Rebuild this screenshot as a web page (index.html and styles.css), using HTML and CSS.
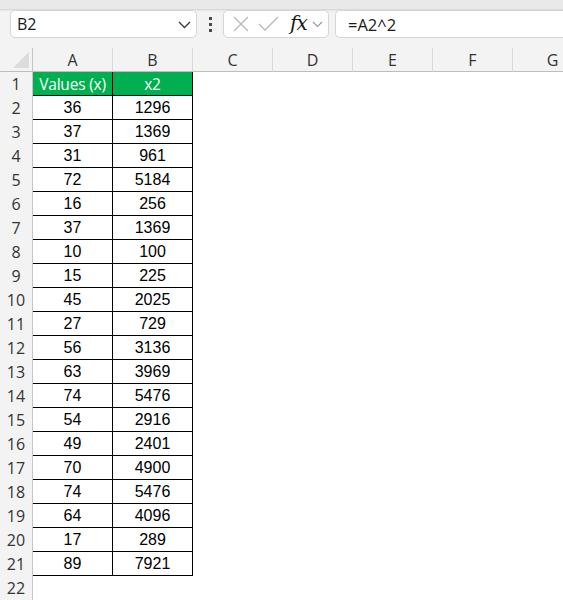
FILE: index.html
```html
<!DOCTYPE html>
<html>
<head>
<meta charset="utf-8">
<link rel="stylesheet" href="styles.css">
</head>
<body>
<div class="app">
  <div class="ribbon-edge"></div>
  <div class="fbar">
    <div class="namebox">
      <span class="ref">B2</span>
      <svg class="chev" width="13" height="8" viewBox="0 0 13 8"><path d="M1 1 L6.5 6.5 L12 1" fill="none" stroke="#3a3a3a" stroke-width="1.3"/></svg>
    </div>
    <div class="dots"><i></i><i></i><i></i></div>
    <div class="tools">
      <svg class="ico" width="18" height="18" viewBox="0 0 18 18"><path d="M2 2 L16 16 M16 2 L2 16" stroke="#b8b8b8" stroke-width="1.3" fill="none"/></svg>
      <svg class="ico" width="21" height="16" viewBox="0 0 21 16"><path d="M1 8 L7 14 L20 1" stroke="#b8b8b8" stroke-width="1.3" fill="none"/></svg>
      <span class="fx">fx</span>
      <svg class="chev2" width="11" height="7" viewBox="0 0 11 7"><path d="M1 1 L5.5 5.5 L10 1" fill="none" stroke="#9a9a9a" stroke-width="1.2"/></svg>
    </div>
    <div class="formula">=A2^2</div>
  </div>
  <div class="sheet">
    <div class="corner"><span class="tri"></span></div>
    <div class="colh">A</div><div class="colh">B</div><div class="colh">C</div><div class="colh">D</div><div class="colh">E</div><div class="colh">F</div><div class="colh">G</div>

    <div class="rowh">1</div><div class="cell head">Values (x)</div><div class="cell head">x2</div><div class="blank"></div><div class="blank"></div><div class="blank"></div><div class="blank"></div><div class="blank"></div>
    <div class="rowh">2</div><div class="cell">36</div><div class="cell">1296</div><div class="blank"></div><div class="blank"></div><div class="blank"></div><div class="blank"></div><div class="blank"></div>
    <div class="rowh">3</div><div class="cell">37</div><div class="cell">1369</div><div class="blank"></div><div class="blank"></div><div class="blank"></div><div class="blank"></div><div class="blank"></div>
    <div class="rowh">4</div><div class="cell">31</div><div class="cell">961</div><div class="blank"></div><div class="blank"></div><div class="blank"></div><div class="blank"></div><div class="blank"></div>
    <div class="rowh">5</div><div class="cell">72</div><div class="cell">5184</div><div class="blank"></div><div class="blank"></div><div class="blank"></div><div class="blank"></div><div class="blank"></div>
    <div class="rowh">6</div><div class="cell">16</div><div class="cell">256</div><div class="blank"></div><div class="blank"></div><div class="blank"></div><div class="blank"></div><div class="blank"></div>
    <div class="rowh">7</div><div class="cell">37</div><div class="cell">1369</div><div class="blank"></div><div class="blank"></div><div class="blank"></div><div class="blank"></div><div class="blank"></div>
    <div class="rowh">8</div><div class="cell">10</div><div class="cell">100</div><div class="blank"></div><div class="blank"></div><div class="blank"></div><div class="blank"></div><div class="blank"></div>
    <div class="rowh">9</div><div class="cell">15</div><div class="cell">225</div><div class="blank"></div><div class="blank"></div><div class="blank"></div><div class="blank"></div><div class="blank"></div>
    <div class="rowh">10</div><div class="cell">45</div><div class="cell">2025</div><div class="blank"></div><div class="blank"></div><div class="blank"></div><div class="blank"></div><div class="blank"></div>
    <div class="rowh">11</div><div class="cell">27</div><div class="cell">729</div><div class="blank"></div><div class="blank"></div><div class="blank"></div><div class="blank"></div><div class="blank"></div>
    <div class="rowh">12</div><div class="cell">56</div><div class="cell">3136</div><div class="blank"></div><div class="blank"></div><div class="blank"></div><div class="blank"></div><div class="blank"></div>
    <div class="rowh">13</div><div class="cell">63</div><div class="cell">3969</div><div class="blank"></div><div class="blank"></div><div class="blank"></div><div class="blank"></div><div class="blank"></div>
    <div class="rowh">14</div><div class="cell">74</div><div class="cell">5476</div><div class="blank"></div><div class="blank"></div><div class="blank"></div><div class="blank"></div><div class="blank"></div>
    <div class="rowh">15</div><div class="cell">54</div><div class="cell">2916</div><div class="blank"></div><div class="blank"></div><div class="blank"></div><div class="blank"></div><div class="blank"></div>
    <div class="rowh">16</div><div class="cell">49</div><div class="cell">2401</div><div class="blank"></div><div class="blank"></div><div class="blank"></div><div class="blank"></div><div class="blank"></div>
    <div class="rowh">17</div><div class="cell">70</div><div class="cell">4900</div><div class="blank"></div><div class="blank"></div><div class="blank"></div><div class="blank"></div><div class="blank"></div>
    <div class="rowh">18</div><div class="cell">74</div><div class="cell">5476</div><div class="blank"></div><div class="blank"></div><div class="blank"></div><div class="blank"></div><div class="blank"></div>
    <div class="rowh">19</div><div class="cell">64</div><div class="cell">4096</div><div class="blank"></div><div class="blank"></div><div class="blank"></div><div class="blank"></div><div class="blank"></div>
    <div class="rowh">20</div><div class="cell">17</div><div class="cell">289</div><div class="blank"></div><div class="blank"></div><div class="blank"></div><div class="blank"></div><div class="blank"></div>
    <div class="rowh">21</div><div class="cell">89</div><div class="cell">7921</div><div class="blank"></div><div class="blank"></div><div class="blank"></div><div class="blank"></div><div class="blank"></div>
    <div class="rowh">22</div><div class="blank"></div><div class="blank"></div><div class="blank"></div><div class="blank"></div><div class="blank"></div><div class="blank"></div><div class="blank"></div>
  </div>
</div>
</body>
</html>
```
FILE: styles.css
```css
* { box-sizing: border-box; }
html, body { margin: 0; padding: 0; background: #ffffff; overflow: hidden; }
.app { width: 563px; height: 600px; overflow: hidden; background: #f3f3f3; font-family: "Open Sans", "Noto Sans", sans-serif; }

.ribbon-edge { height: 10px; background: #e9e9e9; border-bottom: 1px solid #d9d9d9; box-shadow: 0 1px 2px rgba(0,0,0,0.06); }

.fbar { height: 38px; display: flex; align-items: flex-start; padding: 0 0 0 10px; }
.namebox { width: 187px; height: 28px; background: #fff; border: 1px solid #d6d6d6; border-radius: 5px; display: flex; align-items: center; justify-content: space-between; padding: 0 5px 0 6px; }
.ref { font-size: 16px; color: #1a1a1a; }
.chev { margin-top: 1px; }
.dots { width: 26px; height: 28px; display: flex; flex-direction: column; align-items: center; justify-content: center; gap: 3px; }
.dots i { display: block; width: 3px; height: 3px; background: #4a4a4a; }
.tools { width: 106px; height: 28px; background: #fff; border: 1px solid #d6d6d6; border-radius: 5px; display: flex; align-items: center; padding: 0 0 0 8px; }
.tools .ico:nth-child(2) { margin-left: 8px; }
.fx { font-family: "DejaVu Serif", "Liberation Serif", serif; font-style: italic; font-size: 20px; color: #1a1a1a; margin-left: 11px; letter-spacing: -1px; line-height: 1; margin-top: -3px; }
.chev2 { margin-left: 5px; }
.formula { margin-left: 6px; flex: 1; height: 28px; background: #fff; border: 1px solid #d6d6d6; border-right: none; border-radius: 5px 0 0 5px; padding-left: 12px; font-size: 16.5px; color: #1a1a1a; display: flex; align-items: center; }

.sheet { display: grid; grid-template-columns: 33px repeat(7, 80px); grid-auto-rows: 24px; background: #fff; }
.corner { background: #f3f3f3; border-right: 1px solid #c6c6c6; border-bottom: 1px solid #bdbdbd; position: relative; }
.tri { position: absolute; right: 3px; bottom: 3px; width: 16px; height: 16px; background: #dcdcdc; clip-path: polygon(100% 0, 100% 100%, 0 100%); }
.colh { background: #f3f3f3; border-right: 1px solid #dadada; border-bottom: 1px solid #bdbdbd; display: flex; align-items: center; justify-content: center; font-size: 16px; color: #333; }
.rowh { background: #f3f3f3; border-right: 1px solid #c6c6c6; display: flex; align-items: center; justify-content: center; font-size: 16px; color: #333; }
.cell { border-right: 1px solid #000; border-bottom: 1px solid #000; display: flex; align-items: center; justify-content: center; font-family: "Liberation Sans", Arial, sans-serif; font-size: 16px; color: #000; padding-top: 1px; }
.cell.head { background: #00b050; color: #fff; font-family: "Open Sans", "Noto Sans", sans-serif; font-size: 15.5px; letter-spacing: -0.2px; padding-top: 0; }
.blank { background: #fff; }
```
